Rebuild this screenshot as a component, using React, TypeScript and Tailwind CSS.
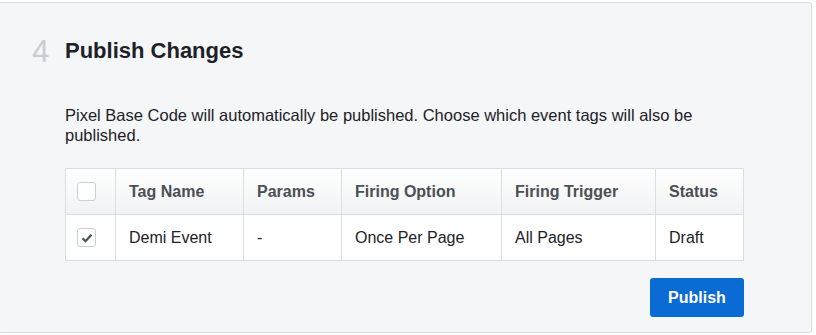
import React from 'react'

const cols = [
  { label: 'Tag Name', w: 'w-[128px]' },
  { label: 'Params', w: 'w-[98px]' },
  { label: 'Firing Option', w: 'w-[160px]' },
  { label: 'Firing Trigger', w: 'w-[154px]' },
  { label: 'Status', w: 'w-[88px]' },
]

const row = ['Demi Event', '-', 'Once Per Page', 'All Pages', 'Draft']

function Checkbox({ checked }: { checked?: boolean }) {
  return (
    <span className="flex h-[19px] w-[19px] items-center justify-center rounded-[3px] border border-[#ccd0d5] bg-white">
      {checked && (
        <svg viewBox="0 0 12 12" className="h-[12px] w-[12px]" fill="none" stroke="#4b4f56" strokeWidth="2.2">
          <path d="M1.5 6.2l3 3 6-6.5" />
        </svg>
      )}
    </span>
  )
}

export default function App() {
  return (
    <div className="h-[335px] w-[816px] overflow-hidden bg-white font-['Liberation_Sans',Arial,sans-serif]">
      <div className="-ml-[2px] mt-[2px] h-[331px] w-[814px] rounded-[3px] border border-[#dadde1] bg-[#f5f6f7] pl-[33px] pt-[34px]">
        {/* header */}
        <div className="flex h-[28px] items-center">
          <span className="w-[33px] text-[31px] leading-none text-[#c8ccd1]">4</span>
          <h2 className="text-[22px] font-bold leading-[28px] text-[#1d2129]">Publish Changes</h2>
        </div>

        <div className="ml-[33px] w-[679px]">
          <p className="mt-[40px] text-[16.5px] leading-[20px] text-[#1d2129]">
            Pixel Base Code will automatically be published. Choose which event tags will also be published.
          </p>

          <table className="mt-[23px] w-[679px] table-fixed border-collapse border border-[#dadde1] text-[16px]">
            <thead>
              <tr className="h-[46px] bg-gradient-to-b from-white to-[#f1f2f4]">
                <th className="w-[50px] border border-[#dadde1] p-0">
                  <div className="flex pl-[11px]">
                    <Checkbox />
                  </div>
                </th>
                {cols.map((c) => (
                  <th key={c.label} className={`${c.w} border border-[#dadde1] px-[13px] text-left font-bold text-[#4b4f56]`}>
                    {c.label}
                  </th>
                ))}
              </tr>
            </thead>
            <tbody>
              <tr className="h-[46px] bg-white">
                <td className="border border-[#dadde1] p-0">
                  <div className="flex pl-[11px]">
                    <Checkbox checked />
                  </div>
                </td>
                {row.map((v, i) => (
                  <td key={i} className="border border-[#dadde1] px-[13px] text-[#1d2129]">
                    {v}
                  </td>
                ))}
              </tr>
            </tbody>
          </table>

          <div className="mt-[17px] flex justify-end">
            <button className="h-[39px] w-[94px] rounded-[3px] bg-[#0b6bd5] text-[16px] font-bold text-white">
              Publish
            </button>
          </div>
        </div>
      </div>
    </div>
  )
}
